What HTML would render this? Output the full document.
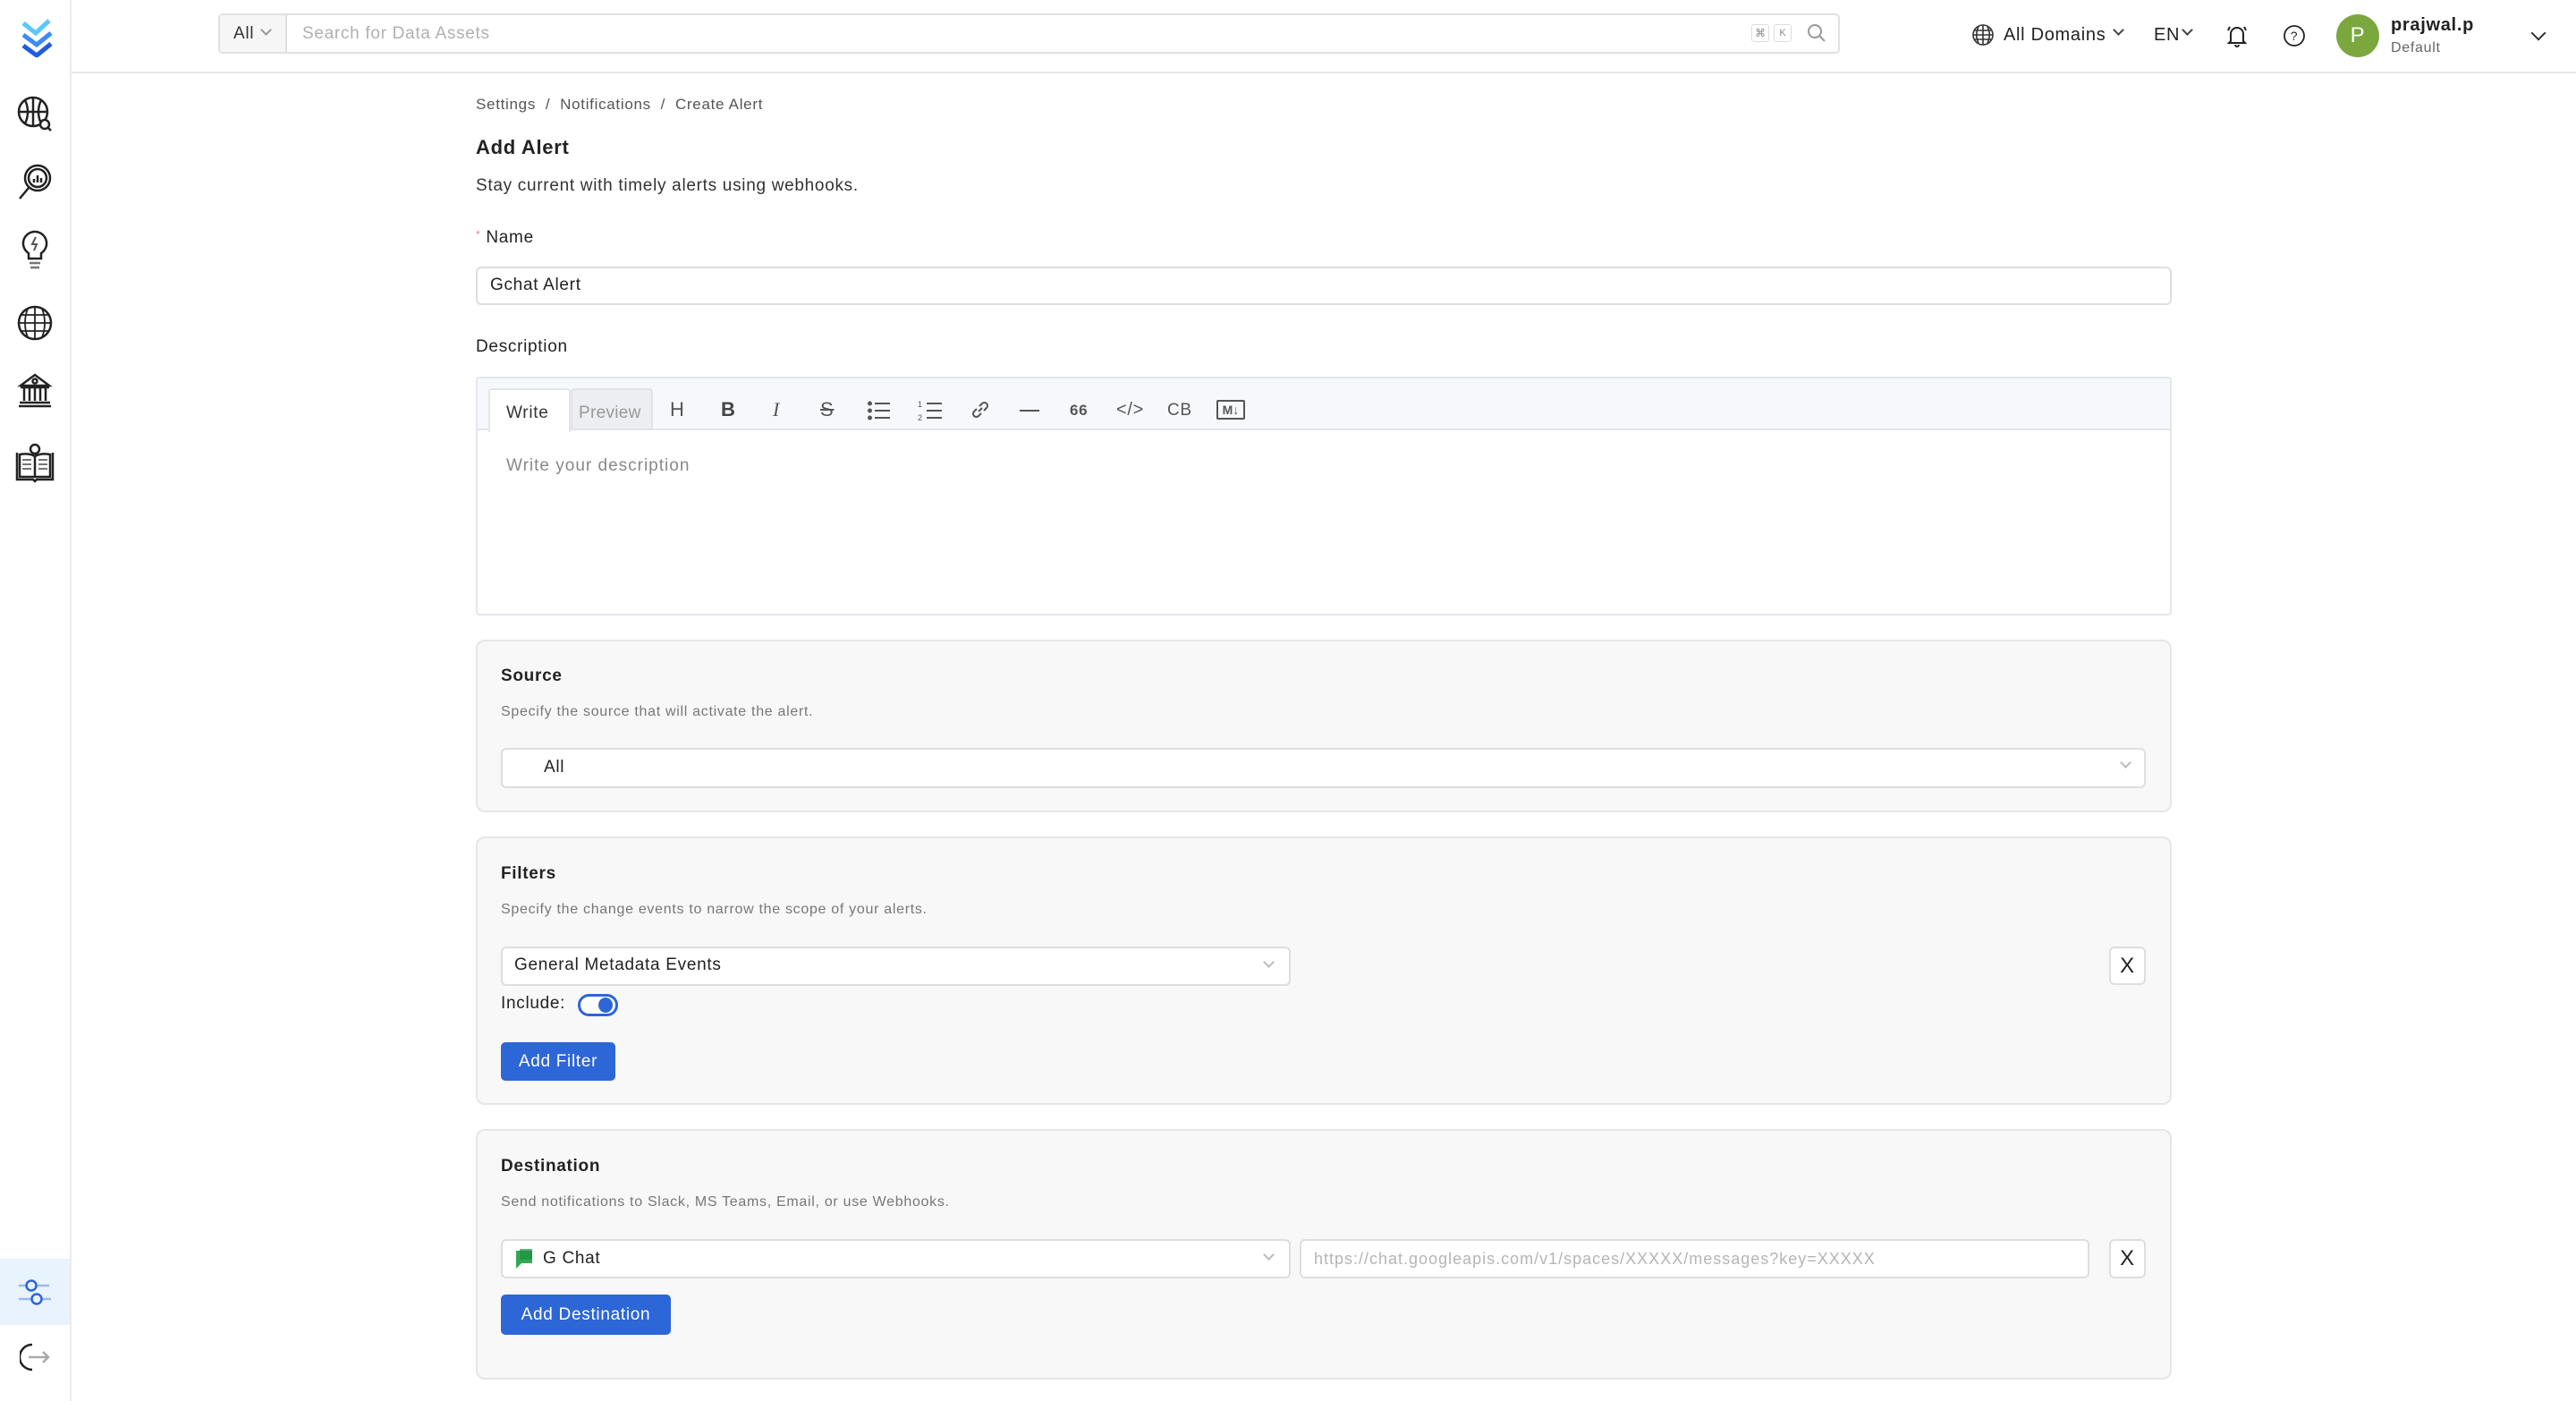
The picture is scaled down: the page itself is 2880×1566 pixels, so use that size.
<!DOCTYPE html>
<html><head><meta charset="utf-8"><style>
*{box-sizing:border-box;margin:0;padding:0}
body{width:2880px;height:1566px;background:#fff;font-family:"Liberation Sans",sans-serif;color:#292929;position:relative;overflow:hidden;letter-spacing:0.7px}
.a{position:absolute}
.side{left:0;top:0;width:80px;height:1566px;border-right:2px solid #ebebeb;background:#fff}
.hdr{left:80px;top:0;right:0;height:82px;border-bottom:2px solid #e8e8e8;background:#fff}
.txt{white-space:nowrap;line-height:1}
.card{background:#f8f8f8;border:2px solid #e6e6e6;border-radius:10px}
.inp{background:#fff;border:2px solid #dedede;border-radius:6px}
.btn{background:#2d66d6;color:#fff;border-radius:5px;font-size:19px;display:flex;align-items:center;justify-content:center}
.xb{background:#fff;border:2px solid #dedede;border-radius:6px;display:flex;align-items:center;justify-content:center;font-size:24px;color:#222}
.chev{width:11px;height:11px;border-right:2px solid #aaa;border-bottom:2px solid #aaa;transform:rotate(45deg)}
.tb{font-size:22px;color:#555}
</style></head><body>
<div class="a side"></div>
<div class="a hdr"></div>
<!-- logo -->
<svg class="a" style="left:20px;top:18px" width="44" height="46" viewBox="0 0 44 46"><path d="M6 8l14 11 15-14" stroke="#5ac8fa" stroke-width="5" fill="none"/><path d="M6 21l15 11 16-13" stroke="#3d8bf5" stroke-width="5" fill="none"/><path d="M6 33l15 11 16-13" stroke="#1e5be0" stroke-width="5" fill="none"/></svg>
<!-- sidebar icons -->
<svg class="a" style="left:18px;top:106px" width="42" height="42" viewBox="0 0 42 42" fill="none" stroke="#222" stroke-width="2.5"><circle cx="19" cy="19" r="16"/><path d="M3 19h32M19 3v32M10 6c4 8 4 18 0 26M28 6c-4 8-4 18 0 26"/><circle cx="32" cy="33" r="5" fill="#fff"/><path d="M36 37l3 3"/></svg>
<svg class="a" style="left:18px;top:182px" width="42" height="44" viewBox="0 0 42 44" fill="none" stroke="#222" stroke-width="2.5"><circle cx="24" cy="17" r="14"/><circle cx="24" cy="17" r="10"/><path d="M14 28L4 40"/><path d="M20 22v-4M24 22v-8M28 22v-5"/></svg>
<svg class="a" style="left:22px;top:256px" width="34" height="48" viewBox="0 0 34 48" fill="none" stroke="#222" stroke-width="2.5"><path d="M17 3a13 13 0 0 0-7 24v6h14v-6a13 13 0 0 0-7-24z"/><path d="M18 9l-4 8h5l-3 7" stroke="#555" stroke-width="2"/><path d="M11 38h12M12 43h10" stroke="#777"/></svg>
<svg class="a" style="left:18px;top:340px" width="42" height="42" viewBox="0 0 42 42" fill="none" stroke="#222" stroke-width="2.5"><circle cx="21" cy="21" r="18"/><path d="M3 21h36M21 3v36M6 12h30M6 30h30M13 5c-4 10-4 22 0 32M29 5c4 10 4 22 0 32" stroke-width="1.8"/></svg>
<svg class="a" style="left:18px;top:414px" width="42" height="42" viewBox="0 0 42 42" fill="none" stroke="#222" stroke-width="2.5"><path d="M5 17l16-12 16 12z"/><circle cx="21" cy="12" r="2.5"/><path d="M5 19h32M9 19v15M15 19v15M21 19v15M27 19v15M33 19v15M4 36h34M3 40h36"/></svg>
<svg class="a" style="left:16px;top:494px" width="46" height="46" viewBox="0 0 46 46" fill="none" stroke="#222" stroke-width="2.5"><path d="M3 12v30h18l2 2 2-2h18V12"/><path d="M6 14v25h17V16c-5-3-11-3-17-2zM40 14v25H23V16c5-3 11-3 17-2z"/><circle cx="23" cy="8" r="5" fill="#fff"/><path d="M9 20h10M9 25h10M9 30h10M27 20h10M27 25h10M27 30h10" stroke-width="1.2"/></svg>
<div class="a" style="left:0;top:1407px;width:78px;height:74px;background:#e8f3fd"></div>
<svg class="a" style="left:20px;top:1426px" width="38" height="36" viewBox="0 0 38 36" fill="none" stroke-width="2.5"><path d="M1 11h8M21 11h14M1 26h14M27 26h10" stroke="#9bb8ee"/><circle cx="15" cy="11" r="5.5" stroke="#2d66d6"/><circle cx="21" cy="26" r="5.5" stroke="#2d66d6"/></svg>
<svg class="a" style="left:22px;top:1500px" width="36" height="34" viewBox="0 0 36 34" fill="none" stroke-width="2.5"><path d="M14 3a14 14 0 0 0 0 28" stroke="#222"/><path d="M10 17h22M26 11l6 6-6 6" stroke="#aaa"/></svg>

<!-- search -->
<div class="a" style="left:244px;top:15px;width:1813px;height:45px;border:2px solid #e0e0e0;border-radius:5px;background:#fff"></div>
<div class="a" style="left:246px;top:17px;width:75px;height:41px;background:#f6f6f6;border-right:2px solid #e0e0e0"></div>
<div class="a txt" style="left:261px;top:28px;font-size:19px;color:#333">All</div>
<div class="a chev" style="left:293px;top:29px;width:9px;height:9px;border-color:#999"></div>
<div class="a txt" style="left:338px;top:28px;font-size:19px;color:#b0b0b0">Search for Data Assets</div>
<div class="a" style="left:1958px;top:27px;width:20px;height:20px;border:1px solid #ddd;border-radius:3px;font-size:12px;color:#888;text-align:center;line-height:18px;letter-spacing:0">⌘</div>
<div class="a" style="left:1983px;top:27px;width:20px;height:20px;border:1px solid #ddd;border-radius:3px;font-size:11px;color:#888;text-align:center;line-height:18px;letter-spacing:0">K</div>
<svg class="a" style="left:2020px;top:26px" width="22" height="22" viewBox="0 0 22 22" fill="none" stroke="#999" stroke-width="2"><circle cx="9" cy="9" r="7"/><path d="M14 14l6 6"/></svg>
<!-- header right -->
<svg class="a" style="left:2204px;top:26px" width="26" height="26" viewBox="0 0 26 26" fill="none" stroke="#333" stroke-width="1.6"><circle cx="13" cy="13" r="11"/><path d="M2 13h22M13 2v22M4 8h18M4 18h18M8 4c-3 6-3 12 0 18M18 4c3 6 3 12 0 18"/></svg>
<div class="a txt" style="left:2240px;top:29px;font-size:20px;color:#222">All Domains</div>
<div class="a chev" style="left:2364px;top:29px;width:9px;height:9px;border-color:#444"></div>
<div class="a txt" style="left:2408px;top:29px;font-size:20px;color:#222">EN</div>
<div class="a chev" style="left:2441px;top:29px;width:9px;height:9px;border-color:#444"></div>
<svg class="a" style="left:2488px;top:26px" width="26" height="28" viewBox="0 0 26 28" fill="none" stroke="#222" stroke-width="2"><path d="M6 20V12a7 7 0 0 1 14 0v8l2 2H4z"/><path d="M11 24a2 2 0 0 0 4 0M3 8l2-4M23 8l-2-4"/></svg>
<svg class="a" style="left:2552px;top:27px" width="26" height="26" viewBox="0 0 26 26" fill="none" stroke="#222" stroke-width="1.8"><circle cx="13" cy="13" r="11"/><text x="13" y="18" font-size="14" text-anchor="middle" fill="#222" stroke="none" font-family="Liberation Sans">?</text></svg>
<div class="a" style="left:2612px;top:16px;width:48px;height:48px;border-radius:50%;background:#7aa83f;color:#fff;font-size:24px;text-align:center;line-height:48px">P</div>
<div class="a txt" style="left:2673px;top:18px;font-size:20px;font-weight:bold;color:#222">prajwal.p</div>
<div class="a txt" style="left:2673px;top:46px;font-size:16px;color:#666">Default</div>
<div class="a chev" style="left:2832px;top:31px;width:12px;height:12px;border-color:#333"></div>

<!-- content -->
<div class="a txt" style="left:532px;top:108px;font-size:17px;color:#555">Settings &nbsp;/&nbsp; Notifications &nbsp;/&nbsp; Create Alert</div>
<div class="a txt" style="left:532px;top:154px;font-size:22px;font-weight:bold;color:#222">Add Alert</div>
<div class="a txt" style="left:532px;top:198px;font-size:19px;color:#333">Stay current with timely alerts using webhooks.</div>
<div class="a txt" style="left:532px;top:256px;font-size:19px;color:#222"><span style="color:#f08080;font-size:12px;vertical-align:top">*</span> Name</div>
<div class="a inp" style="left:532px;top:298px;width:1896px;height:43px"></div>
<div class="a txt" style="left:548px;top:309px;font-size:19px;color:#222">Gchat Alert</div>
<div class="a txt" style="left:532px;top:378px;font-size:19px;color:#222">Description</div>
<div class="a" style="left:532px;top:421px;width:1896px;height:267px;border:2px solid #e3e6ec;border-radius:4px;background:#fff"></div>
<div class="a" style="left:534px;top:423px;width:1892px;height:58px;background:#f6f8fb;border-bottom:2px solid #e3e6ec"></div>
<div class="a" style="left:546px;top:434px;width:92px;height:49px;background:#fff;border:2px solid #e3e6ec;border-bottom:none;border-radius:4px 4px 0 0"></div>
<div class="a txt" style="left:566px;top:452px;font-size:19px;color:#333">Write</div>
<div class="a" style="left:638px;top:434px;width:92px;height:47px;background:#eceef1;border:2px solid #e0e3e8;border-radius:4px 4px 0 0"></div>
<div class="a txt" style="left:647px;top:452px;font-size:19px;color:#999;letter-spacing:0.3px">Preview</div>
<div class="a txt tb" style="left:749px;top:447px">H</div>
<div class="a txt tb" style="left:806px;top:447px;font-weight:bold;color:#444">B</div>
<div class="a txt tb" style="left:864px;top:447px;font-style:italic;font-family:'Liberation Serif',serif">I</div>
<div class="a txt tb" style="left:917px;top:447px;text-decoration:line-through">S</div>
<svg class="a" style="left:970px;top:448px" width="26" height="22" viewBox="0 0 26 22" stroke="#555" stroke-width="2"><path d="M8 3h17M8 11h17M8 19h17"/><circle cx="2.5" cy="3" r="1.5" fill="#555"/><circle cx="2.5" cy="11" r="1.5" fill="#555"/><circle cx="2.5" cy="19" r="1.5" fill="#555"/></svg>
<svg class="a" style="left:1026px;top:446px" width="28" height="26" viewBox="0 0 28 26" stroke="#555" stroke-width="2"><path d="M10 5h17M10 13h17M10 21h17"/><text x="0" y="9" font-size="9" fill="#555" stroke="none">1</text><text x="0" y="24" font-size="9" fill="#555" stroke="none">2</text></svg>
<svg class="a" style="left:1084px;top:446px" width="24" height="24" viewBox="0 0 24 24" fill="none" stroke="#555" stroke-width="2"><path d="M10 14l4-4M8 11l-3 3a3.5 3.5 0 0 0 5 5l3-3M16 13l3-3a3.5 3.5 0 0 0-5-5l-3 3"/></svg>
<div class="a" style="left:1140px;top:458px;width:22px;height:2px;background:#555"></div>
<div class="a txt" style="left:1196px;top:450px;font-size:17px;font-weight:bold;color:#555">66</div>
<div class="a txt tb" style="left:1248px;top:448px;font-size:20px">&lt;/&gt;</div>
<div class="a txt tb" style="left:1305px;top:449px;font-size:19px">CB</div>
<div class="a" style="left:1360px;top:447px;width:32px;height:22px;border:2px solid #555;border-radius:2px;font-size:14px;font-weight:bold;color:#555;text-align:center;line-height:18px;letter-spacing:0">M↓</div>
<div class="a txt" style="left:566px;top:511px;font-size:19px;color:#888;letter-spacing:1px">Write your description</div>

<!-- Source -->
<div class="a card" style="left:532px;top:715px;width:1896px;height:193px"></div>
<div class="a txt" style="left:560px;top:746px;font-size:19px;font-weight:bold;color:#222">Source</div>
<div class="a txt" style="left:560px;top:788px;font-size:16px;color:#777">Specify the source that will activate the alert.</div>
<div class="a inp" style="left:560px;top:836px;width:1839px;height:45px"></div>
<div class="a txt" style="left:608px;top:848px;font-size:19px;color:#222">All</div>
<div class="a chev" style="left:2372px;top:848px;width:9px;height:9px;border-color:#bbb"></div>

<!-- Filters -->
<div class="a card" style="left:532px;top:935px;width:1896px;height:300px"></div>
<div class="a txt" style="left:560px;top:967px;font-size:19px;font-weight:bold;color:#222">Filters</div>
<div class="a txt" style="left:560px;top:1009px;font-size:16px;color:#777">Specify the change events to narrow the scope of your alerts.</div>
<div class="a inp" style="left:560px;top:1058px;width:883px;height:44px"></div>
<div class="a txt" style="left:575px;top:1069px;font-size:19px;color:#222">General Metadata Events</div>
<div class="a chev" style="left:1414px;top:1071px;width:9px;height:9px;border-color:#bbb"></div>
<div class="a xb" style="left:2358px;top:1058px;width:41px;height:43px">X</div>
<div class="a txt" style="left:560px;top:1112px;font-size:19px;color:#222">Include:</div>
<div class="a" style="left:646px;top:1111px;width:45px;height:25px;border:3px solid #2d66d6;border-radius:13px;background:#fff"></div>
<div class="a" style="left:669px;top:1115px;width:16px;height:17px;border-radius:50%;background:#2d66d6"></div>
<div class="a btn" style="left:560px;top:1165px;width:128px;height:43px">Add Filter</div>

<!-- Destination -->
<div class="a card" style="left:532px;top:1262px;width:1896px;height:280px"></div>
<div class="a txt" style="left:560px;top:1294px;font-size:19px;font-weight:bold;color:#222">Destination</div>
<div class="a txt" style="left:560px;top:1336px;font-size:16px;color:#777">Send notifications to Slack, MS Teams, Email, or use Webhooks.</div>
<div class="a inp" style="left:560px;top:1385px;width:883px;height:44px"></div>
<svg class="a" style="left:575px;top:1394px" width="22" height="26" viewBox="0 0 22 26"><path d="M2 4h18v14H8l-6 6z" fill="#34a853"/><rect x="6" y="2" width="14" height="12" fill="#1e8e3e" opacity=".7"/></svg>
<div class="a txt" style="left:607px;top:1397px;font-size:19px;color:#222">G Chat</div>
<div class="a chev" style="left:1414px;top:1398px;width:9px;height:9px;border-color:#bbb"></div>
<div class="a inp" style="left:1453px;top:1385px;width:883px;height:44px"></div>
<div class="a txt" style="left:1469px;top:1398px;font-size:18px;color:#b5b5b5;letter-spacing:1px">https://chat.googleapis.com/v1/spaces/XXXXX/messages?key=XXXXX</div>
<div class="a xb" style="left:2358px;top:1385px;width:41px;height:44px">X</div>
<div class="a btn" style="left:560px;top:1447px;width:190px;height:45px">Add Destination</div>
</body></html>
